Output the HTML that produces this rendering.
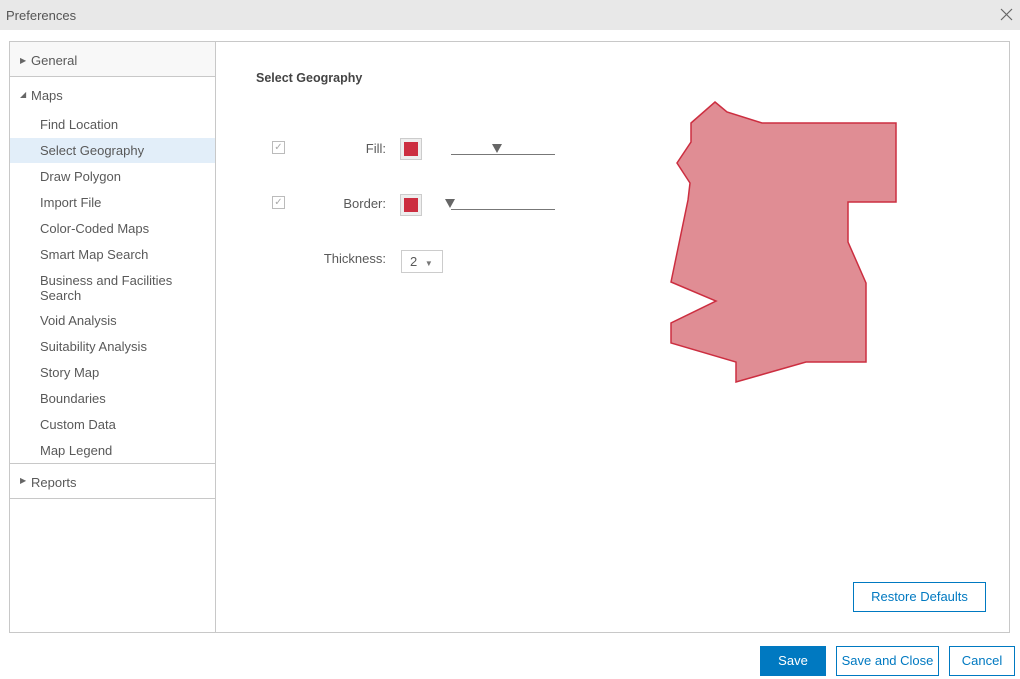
<!DOCTYPE html>
<html><head><style>
*{box-sizing:border-box;margin:0;padding:0}
body{width:1020px;height:679px;background:#fff;font-family:"Liberation Sans",sans-serif;color:#595959;font-size:13px;position:relative;overflow:hidden}
.title{position:absolute;left:0;top:0;width:1020px;height:30px;background:#e8e8e8;font-size:13px;padding:8px 0 0 6px;color:#555}
.x{position:absolute;right:7px;top:8px}
.side{position:absolute;left:9px;top:41px;width:207px;height:592px;border:1px solid #c8c8c8}
.main{position:absolute;left:215px;top:41px;width:795px;height:592px;border:1px solid #c8c8c8}
.hd{position:absolute;left:0;width:205px;height:35px;padding:11px 0 0 21px;border-bottom:1px solid #c8c8c8}
.it{position:absolute;left:30px;font-size:13px}
.sel{position:absolute;left:0;top:96px;width:205px;height:25px;background:#e2eef9}
.tri{position:absolute;left:10px;font-size:8px;color:#666}
.lbl{position:absolute;text-align:right;width:100px}
.cb{position:absolute;width:13px;height:13px;border:1px solid #bbb;font-size:10px;color:#aaa;line-height:11px;text-align:center}
.sw{position:absolute;width:22px;height:22px;background:#eee;border:1px solid #ccc}
.sw i{position:absolute;left:3px;top:3px;width:14px;height:14px;background:#cc2e40}
.btn{position:absolute;height:30px;border:1px solid #0079c1;color:#0079c1;font-size:13px;text-align:center;line-height:28px;background:#fff}
</style></head><body>
<div class="title">Preferences<svg class="x" width="13" height="13"><path d="M1 1L12 12M12 1L1 12" stroke="#666" stroke-width="1.2"/></svg></div>
<div class="side">
<div class="hd" style="top:0;background:#f8f8f8">General</div><span class="tri" style="top:14px">▶</span>
<div class="hd" style="top:35px;border-bottom:none">Maps</div><span class="tri" style="top:48px">◢</span>
<div class="sel"></div>
<div class="it" style="top:75px">Find Location</div>
<div class="it" style="top:101px">Select Geography</div>
<div class="it" style="top:127px">Draw Polygon</div>
<div class="it" style="top:153px">Import File</div>
<div class="it" style="top:179px">Color-Coded Maps</div>
<div class="it" style="top:205px">Smart Map Search</div>
<div class="it" style="top:231px;line-height:15px">Business and Facilities<br>Search</div>
<div class="it" style="top:271px">Void Analysis</div>
<div class="it" style="top:297px">Suitability Analysis</div>
<div class="it" style="top:323px">Story Map</div>
<div class="it" style="top:349px">Boundaries</div>
<div class="it" style="top:375px">Custom Data</div>
<div class="it" style="top:401px">Map Legend</div>
<div class="hd" style="top:421px;border-top:1px solid #c8c8c8;height:36px">Reports</div><span class="tri" style="top:434px">▶</span>
</div>
<div class="main">
<div style="position:absolute;left:40px;top:29px;font-weight:bold;font-size:12.5px;color:#444">Select Geography</div>
<div class="cb" style="left:56px;top:99px">✓</div>
<div class="cb" style="left:56px;top:154px">✓</div>
<div class="lbl" style="left:70px;top:99px">Fill:</div>
<div class="lbl" style="left:70px;top:154px">Border:</div>
<div class="lbl" style="left:70px;top:209px">Thickness:</div>
<div class="sw" style="left:184px;top:96px"><i></i></div>
<div class="sw" style="left:184px;top:152px"><i></i></div>
<div style="position:absolute;left:235px;top:112px;width:104px;border-top:1px solid #777"></div>
<svg style="position:absolute;left:276px;top:102px" width="11" height="10"><path d="M0 0H10L5 9Z" fill="#666"/></svg>
<div style="position:absolute;left:235px;top:167px;width:104px;border-top:1px solid #777"></div>
<svg style="position:absolute;left:229px;top:157px" width="11" height="10"><path d="M0 0H10L5 9Z" fill="#666"/></svg>
<div style="position:absolute;left:185px;top:208px;width:42px;height:23px;border:1px solid #ccc;padding:3px 0 0 8px">2 <span style="font-size:8px;color:#777;margin-left:4px">▼</span></div>
<svg style="position:absolute;left:0;top:0" width="795" height="592"><polygon points="499,60 511,70 546,81 680,81 680,160 632,160 632,200 650,241 650,320 590,320 520,340 520,320 455,301 455,281 500,259 455,240 472,158 474,141 461,121 475,100 475,81" fill="#e08d94" stroke="#cc2e40" stroke-width="1.5"/></svg>
<div class="btn" style="left:637px;top:540px;width:133px">Restore Defaults</div>
</div>
<div class="btn" style="left:760px;top:646px;width:66px;background:#0079c1;color:#fff">Save</div>
<div class="btn" style="left:836px;top:646px;width:103px">Save and Close</div>
<div class="btn" style="left:949px;top:646px;width:66px">Cancel</div>
</body></html>
